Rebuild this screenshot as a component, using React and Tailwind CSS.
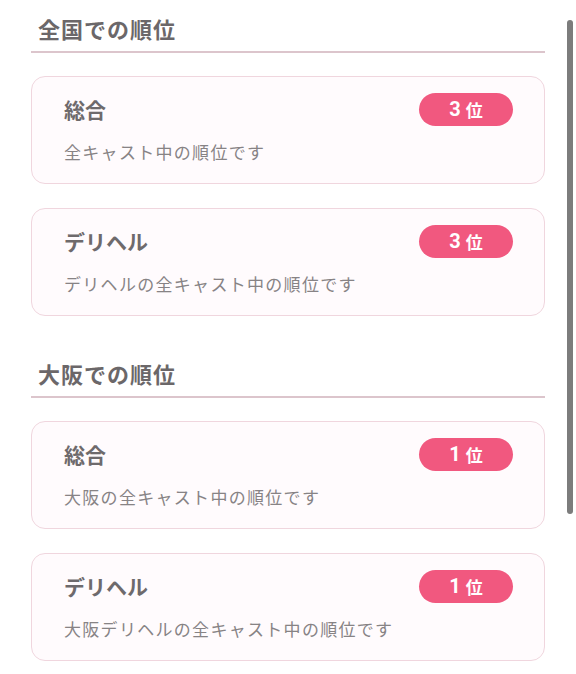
import React from "react";

const sections = [
  {
    title: "全国での順位",
    items: [
      { name: "総合", desc: "全キャスト中の順位です", rank: 3 },
      { name: "デリヘル", desc: "デリヘルの全キャスト中の順位です", rank: 3 },
    ],
  },
  {
    title: "大阪での順位",
    items: [
      { name: "総合", desc: "大阪の全キャスト中の順位です", rank: 1 },
      { name: "デリヘル", desc: "大阪デリヘルの全キャスト中の順位です", rank: 1 },
    ],
  },
];

function RankCard({ name, desc, rank }) {
  return (
    <div className="rounded-[14px] border border-[#f0d6de] bg-[#fffbfd] pl-[32px] pr-[31px] pt-[15px] h-[108px]">
      <div className="flex items-center justify-between">
        <span className="text-[21px] font-bold text-[#6e6a6c] leading-[33px] mt-[1px]">{name}</span>
        <span className="flex items-center justify-center gap-[5px] w-[94px] h-[33px] rounded-full bg-[#f1587f] text-white font-bold">
          <span className="text-[20px] leading-none" style={{ fontFamily: "Roboto, sans-serif" }}>{rank}</span>
          <span className="text-[17px] leading-none">位</span>
        </span>
      </div>
      <p className="mt-[14px] text-[17px] tracking-[1.3px] text-[#878385] leading-[24px]">{desc}</p>
    </div>
  );
}

export default function App() {
  return (
    <div
      className="relative w-[576px] h-[674px] overflow-hidden bg-white"
      style={{ fontFamily: '"Noto Sans CJK JP", "Noto Sans", sans-serif' }}
    >
      <div className="px-[31px] pt-[14px]">
        {sections.map((s, i) => (
          <section key={s.title} className={i > 0 ? "mt-[43px]" : ""}>
            <h2 className="pl-[7px] text-[22px] tracking-[1px] font-bold text-[#6b6769] leading-[28px]">{s.title}</h2>
            <div className="mt-[9px] h-[2px] bg-[#dcc5cc]" />
            <div className="mt-[23px] flex flex-col gap-[24px]">
              {s.items.map((it) => (
                <RankCard key={it.desc} {...it} />
              ))}
            </div>
          </section>
        ))}
      </div>
      {/* scrollbar overlay */}
      <div className="absolute right-[3px] top-[20px] w-[6px] h-[494px] rounded-full bg-[#7c7c7c]" />
    </div>
  );
}
